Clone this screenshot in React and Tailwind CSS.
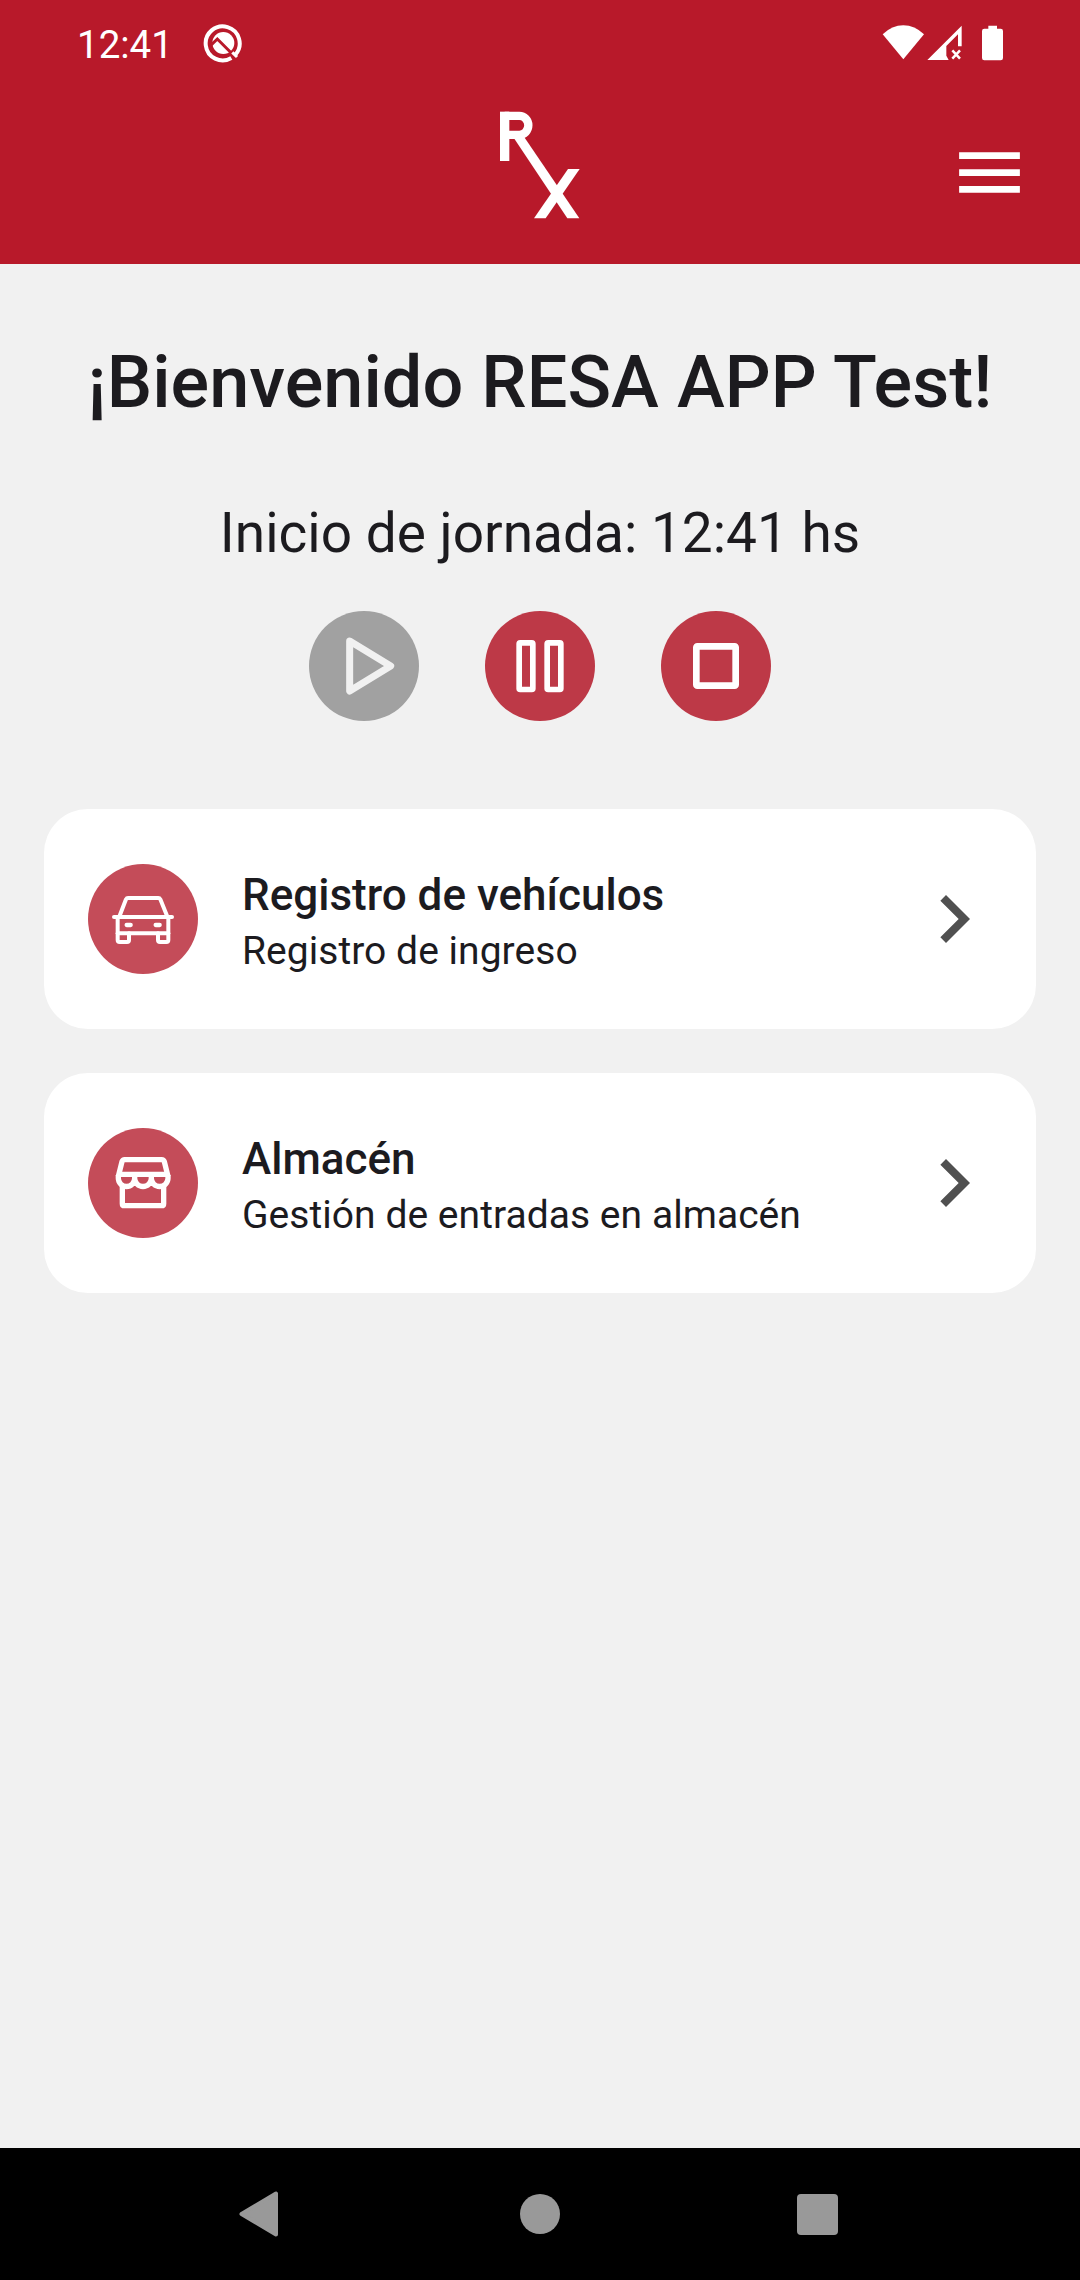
// Status bar icons
function DebugIcon() {
  return (
    <svg className="w-10 h-10" viewBox="0 0 120 120" fill="none">
      <path d="M98 94 A51 51 0 1 0 85 105" stroke="white" strokeWidth="12" />
      <circle cx="61" cy="60" r="33" fill="white" />
      <path d="M20 70 L43 48 L94 99" stroke="#b8192a" strokeWidth="9" />
      <path d="M88 88 L102 102" stroke="white" strokeWidth="9" />
    </svg>
  );
}

function StatusIcons() {
  return (
    <svg className="w-[150px] h-[70px]" viewBox="0 0 450 210" fill="none">
      <path d="M38 73 Q66 46 100 46 Q134 46 162 73 L100 148 Z" fill="white" />
      <path d="M172 150 L275 47 V109 H264 V73 L229 108 V137 L236 150 Z" fill="white" />
      <path d="M247 121 L270 146 M270 121 L247 146" stroke="white" strokeWidth="7.5" />
      <path d="M355 47 H381 V56 H392 Q399 56 399 63 V144 Q399 151 392 151 H343 Q336 151 336 144 V63 Q336 56 343 56 H355 Z" fill="white" />
    </svg>
  );
}

function Logo() {
  return (
    <svg className="w-[120px] h-[130px]" viewBox="0 0 360 390" fill="none">
      <path d="M74 35 V183" stroke="white" strokeWidth="28" />
      <path d="M74 47.5 H118 a27 28.5 0 0 1 0 57 H74" stroke="white" strokeWidth="25" />
      <path d="M100 112 H133 L298 355 H262 Z" fill="white" />
      <path d="M264 207 H299 L197 355 H162 Z" fill="white" />
    </svg>
  );
}

function MenuIcon() {
  return (
    <svg className="w-[81px] h-[81px]" viewBox="0 0 24 24" fill="white">
      <path d="M3 18h18v-2H3v2zm0-5h18v-2H3v2zm0-7v2h18V6H3z" />
    </svg>
  );
}

// Round button icons share a 330 unit box
function PlayIcon() {
  return (
    <svg className="size-full" viewBox="0 0 330 330" fill="none" stroke="#f1f1f1" strokeWidth="21" strokeLinejoin="round">
      <path d="M122 90 L245 165 L122 240 Z" />
    </svg>
  );
}

function PauseIcon() {
  return (
    <svg className="size-full" viewBox="0 0 330 330" fill="none" stroke="white" strokeWidth="17" strokeLinejoin="round">
      <rect x="102.5" y="95.5" width="41" height="140" rx="3" />
      <rect x="186.5" y="95.5" width="41" height="140" rx="3" />
    </svg>
  );
}

function StopIcon() {
  return (
    <svg className="size-full" viewBox="0 0 330 330" fill="none" stroke="white" strokeWidth="20" strokeLinejoin="round">
      <rect x="106" y="106" width="118" height="118" rx="3" />
    </svg>
  );
}

function CarIcon() {
  return (
    <svg className="size-full" viewBox="24 42 330 330" fill="none" stroke="white" strokeWidth="12" strokeLinecap="round" strokeLinejoin="round">
      <path d="M119 197 L138 148 Q140 144 144 144 H235 Q239 144 241 148 L261 197" />
      <path d="M102 201 H276" />
      <path d="M113 203 V270 Q113 276 119 276 H141 Q147 276 147 270 V250" />
      <path d="M265 203 V270 Q265 276 259 276 H240 Q234 276 234 270 V250" />
      <path d="M113 250 H265" />
      <path d="M140 225 H152 M227 225 H239" strokeWidth="13" />
    </svg>
  );
}

function StoreIcon() {
  return (
    <svg className="size-full" viewBox="24 39 330 330" fill="none" stroke="white" strokeWidth="16" strokeLinejoin="round">
      <path d="M115 184 L126 140 Q128 134 134 134 H245 Q251 134 253 140 L264 184" />
      <path d="M116 178 H263" />
      <path d="M115 180 V190 A24.5 24.5 0 0 0 164 190 V180 M164 190 A25 24.5 0 0 0 214 190 V180 M214 190 A25 24.5 0 0 0 264 190 V180" />
      <path d="M127 210 V266 Q127 272 133 272 H245 Q251 272 251 266 V210" />
    </svg>
  );
}

function ChevronIcon() {
  return (
    <svg className="w-24 h-24" viewBox="0 0 24 24" fill="#505050">
      <path d="M10 6L8.59 7.41 13.17 12l-4.58 4.59L10 18l6-6z" />
    </svg>
  );
}

const controls = [
  { id: 'play', icon: PlayIcon, color: 'bg-[#a1a1a1]', disabled: true },
  { id: 'pause', icon: PauseIcon, color: 'bg-[#bd3947]', disabled: false },
  { id: 'stop', icon: StopIcon, color: 'bg-[#bd3947]', disabled: false }
];

const sections = [
  { title: 'Registro de vehículos', subtitle: 'Registro de ingreso', icon: CarIcon },
  { title: 'Almacén', subtitle: 'Gestión de entradas en almacén', icon: StoreIcon }
];

function SectionCard({ title, subtitle, icon: Icon }) {
  return (
    <button className="flex items-center h-[220px] pl-11 pr-[34px] bg-white rounded-[44px] text-left">
      <span className="w-[110px] h-[110px] rounded-full bg-[#c44c59] shrink-0">
        <Icon />
      </span>
      <span className="flex flex-col flex-1 ml-11 pt-1">
        <span className="text-[44px] leading-[60px] font-medium">{title}</span>
        <span className="text-[39px] leading-[52px] tracking-[0.04px]">{subtitle}</span>
      </span>
      <ChevronIcon />
    </button>
  );
}

function App() {
  return (
    <div className="flex flex-col w-[1080px] h-[2280px] bg-[#f1f1f1] text-[#1c1b1f] font-[Roboto,sans-serif]">
      <header className="h-[264px] bg-[#b8192a] text-white">
        <div className="flex items-start h-[100px] pt-[10px] pl-[77px] pr-[60px]">
          <span className="text-[38.5px] leading-[69px] w-[126px]">12:41</span>
          <span className="pt-[13px]"><DebugIcon /></span>
          <span className="ml-auto"><StatusIcons /></span>
        </div>
        <div className="flex items-start pl-[480px] pr-[50px] justify-between">
          <Logo />
          <button className="mt-[31.5px]"><MenuIcon /></button>
        </div>
      </header>

      <main className="flex flex-col flex-1 px-11">
        <h1 className="mt-[75px] text-center text-[72px] leading-[88px] font-medium tracking-[0.06px] whitespace-nowrap">
          ¡Bienvenido RESA APP Test!
        </h1>
        <p className="mt-[70px] text-center text-[55px] leading-[72px]">Inicio de jornada: 12:41 hs</p>

        <div className="flex justify-center gap-[66px] mt-[42px]">
          {controls.map(({ id, icon: Icon, color, disabled }) => (
            <button key={id} disabled={disabled} className={`w-[110px] h-[110px] rounded-full ${color}`}>
              <Icon />
            </button>
          ))}
        </div>

        <div className="flex flex-col gap-11 mt-[88px]">
          {sections.map(section => (
            <SectionCard key={section.title} {...section} />
          ))}
        </div>
      </main>

      {/* Android navigation bar */}
      <nav className="flex items-center h-[132px] bg-black pl-[239px] pr-[242px]">
        <svg className="w-10 h-[46px]" viewBox="0 0 40 46" fill="#999999" stroke="#999999" strokeWidth="4" strokeLinejoin="round">
          <path d="M2.5 23 L37 2.5 V43.5 Z" />
        </svg>
        <span className="w-10 h-10 ml-[241px] rounded-full bg-[#999999]" />
        <span className="w-[41px] h-[41px] ml-auto rounded-[4px] bg-[#999999]" />
      </nav>
    </div>
  );
}

export default App;
